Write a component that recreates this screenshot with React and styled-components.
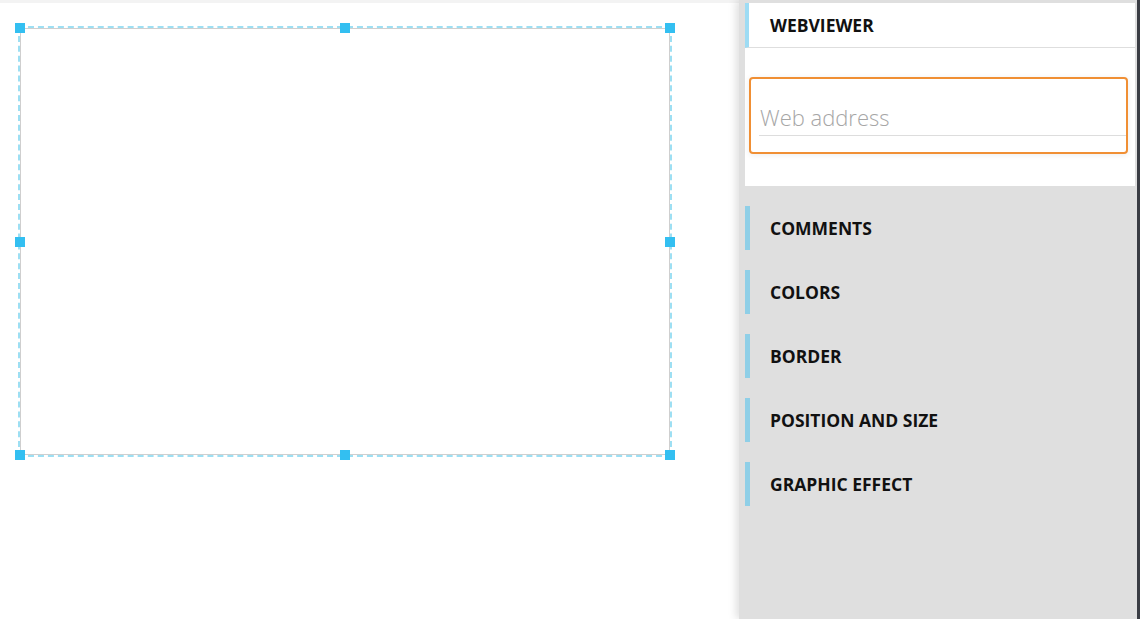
import React from "react";
import styled, { createGlobalStyle } from "styled-components";

const GlobalStyle = createGlobalStyle`
  *, *::before, *::after {
    box-sizing: border-box;
  }
  html, body {
    margin: 0;
    padding: 0;
    height: 100%;
    background: #ffffff;
    font-family: "Open Sans", "Liberation Sans", sans-serif;
  }
  #root {
    height: 100%;
  }
`

const Layout = styled.div`
  display: flex;
  width: 1140px;
  height: 619px;
  overflow: hidden;
`

const Canvas = styled.div`
  flex: 1;
  position: relative;
  background: #ffffff;
  border-top: 3px solid #f3f3f3;
`

const Frame = styled.div`
  position: absolute;
  left: 20px;
  top: 25px;
  width: 650px;
  height: 427px;

  &::after {
    content: "";
    position: absolute;
    inset: 0;
    border: 1px solid #cfcfcf;
  }

  &::before {
    content: "";
    position: absolute;
    inset: -2px -2px -2px -2px;
    border: 2px dashed #9ddff3;
    pointer-events: none;
  }
`

const Handle = styled.span`
  position: absolute;
  z-index: 1;
  width: 10px;
  height: 10px;
  background: #33bff1;
  left: ${p => p.$x};
  top: ${p => p.$y};
  transform: translate(-50%, -50%);
`

const Panel = styled.aside`
  width: 401px;
  flex-shrink: 0;
  background: #dfdfdf;
  padding: 3px 2px 0 6px;
  border-right: 3px solid #3a3d44;
  box-shadow: -3px 0 8px rgba(0, 0, 0, 0.13);
  position: relative;
  z-index: 1;
`

const Card = styled.div`
  background: #ffffff;
`

const CardHeader = styled.div`
  height: 45px;
  display: flex;
  align-items: center;
  border-left: 4px solid #9edcf4;
  border-bottom: 1px solid #dedede;
  padding-left: 21px;
`

const Title = styled.h3`
  margin: 0;
  font-size: 17.5px;
  font-weight: 700;
  color: #111111;
`

const CardBody = styled.div`
  padding: 29px 7px 32px 4px;
`

const InputBox = styled.div`
  height: 77px;
  border: 2px solid #f08f34;
  border-radius: 4px;
  box-shadow: 0 1px 6px rgba(0, 0, 0, 0.08);
  display: flex;
  flex-direction: column;
  justify-content: flex-end;
  padding: 0 0 16px 8px;
`

const AddressInput = styled.input`
  border: none;
  border-bottom: 1px solid #dddddd;
  outline: none;
  background: transparent;
  font-family: "Open Sans", "Liberation Sans", sans-serif;
  font-size: 22px;
  font-weight: 300;
  line-height: 30px;
  color: #333333;
  padding: 1px 0 3px 1px;
  height: 35px;

  &::placeholder {
    color: #a6a6a6;
  }
`

const SectionList = styled.div`
  display: flex;
  flex-direction: column;
  gap: 20px;
  padding-top: 20px;
`

const SectionItem = styled.div`
  height: 44px;
  display: flex;
  align-items: center;
  border-left: 5px solid #8fcfe7;
  padding-left: 20px;
`

const handles = [
  ["0%", "0%"], ["50%", "0%"], ["100%", "0%"],
  ["0%", "50%"], ["100%", "50%"],
  ["0%", "100%"], ["50%", "100%"], ["100%", "100%"],
];

const sections = ["COMMENTS", "COLORS", "BORDER", "POSITION AND SIZE", "GRAPHIC EFFECT"];

const App = () => {
  return (
    <Layout>
      <GlobalStyle />
      <Canvas>
        <Frame>
          {handles.map(([x, y]) => (
            <Handle key={x + y} $x={x} $y={y} />
          ))}
        </Frame>
      </Canvas>
      <Panel>
        <Card>
          <CardHeader>
            <Title>WEBVIEWER</Title>
          </CardHeader>
          <CardBody>
            <InputBox>
              <AddressInput placeholder="Web address" />
            </InputBox>
          </CardBody>
        </Card>
        <SectionList>
          {sections.map(name => (
            <SectionItem key={name}>
              <Title>{name}</Title>
            </SectionItem>
          ))}
        </SectionList>
      </Panel>
    </Layout>
  )
}

export default App;
